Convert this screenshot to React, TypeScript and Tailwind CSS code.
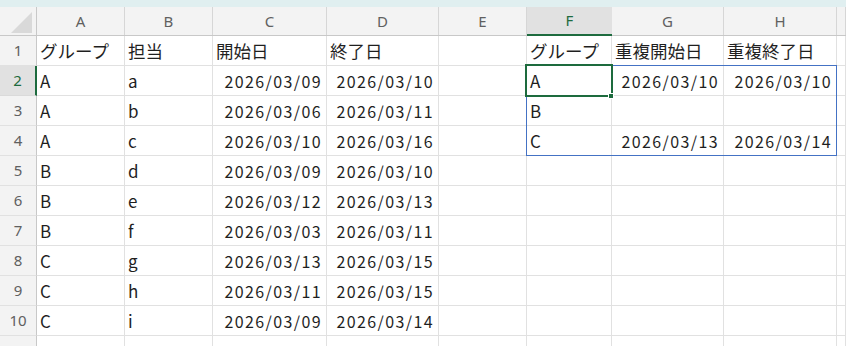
import React from "react";

const cols = ["A", "B", "C", "D", "E", "F", "G", "H", ""];
const colW = ["w-[37px]", "w-[88px]", "w-[88px]", "w-[114px]", "w-[112px]", "w-[88px]", "w-[85px]", "w-[112px]", "w-[113px]", "flex-1"];

type Cell = { t: string; kind?: "jp" | "l" | "r" };

const rows: Cell[][] = [
  [{ t: "グループ", kind: "jp" }, { t: "担当", kind: "jp" }, { t: "開始日", kind: "jp" }, { t: "終了日", kind: "jp" }, { t: "" }, { t: "グループ", kind: "jp" }, { t: "重複開始日", kind: "jp" }, { t: "重複終了日", kind: "jp" }, { t: "" }],
  [{ t: "A" }, { t: "a" }, { t: "2026/03/09", kind: "r" }, { t: "2026/03/10", kind: "r" }, { t: "" }, { t: "A" }, { t: "2026/03/10", kind: "r" }, { t: "2026/03/10", kind: "r" }, { t: "" }],
  [{ t: "A" }, { t: "b" }, { t: "2026/03/06", kind: "r" }, { t: "2026/03/11", kind: "r" }, { t: "" }, { t: "B" }, { t: "" }, { t: "" }, { t: "" }],
  [{ t: "A" }, { t: "c" }, { t: "2026/03/10", kind: "r" }, { t: "2026/03/16", kind: "r" }, { t: "" }, { t: "C" }, { t: "2026/03/13", kind: "r" }, { t: "2026/03/14", kind: "r" }, { t: "" }],
  [{ t: "B" }, { t: "d" }, { t: "2026/03/09", kind: "r" }, { t: "2026/03/10", kind: "r" }, { t: "" }, { t: "" }, { t: "" }, { t: "" }, { t: "" }],
  [{ t: "B" }, { t: "e" }, { t: "2026/03/12", kind: "r" }, { t: "2026/03/13", kind: "r" }, { t: "" }, { t: "" }, { t: "" }, { t: "" }, { t: "" }],
  [{ t: "B" }, { t: "f" }, { t: "2026/03/03", kind: "r" }, { t: "2026/03/11", kind: "r" }, { t: "" }, { t: "" }, { t: "" }, { t: "" }, { t: "" }],
  [{ t: "C" }, { t: "g" }, { t: "2026/03/13", kind: "r" }, { t: "2026/03/15", kind: "r" }, { t: "" }, { t: "" }, { t: "" }, { t: "" }, { t: "" }],
  [{ t: "C" }, { t: "h" }, { t: "2026/03/11", kind: "r" }, { t: "2026/03/15", kind: "r" }, { t: "" }, { t: "" }, { t: "" }, { t: "" }, { t: "" }],
  [{ t: "C" }, { t: "i" }, { t: "2026/03/09", kind: "r" }, { t: "2026/03/14", kind: "r" }, { t: "" }, { t: "" }, { t: "" }, { t: "" }, { t: "" }],
  [{ t: "" }, { t: "" }, { t: "" }, { t: "" }, { t: "" }, { t: "" }, { t: "" }, { t: "" }, { t: "" }],
];

const font = { fontFamily: '"Noto Sans CJK JP", "Noto Sans", sans-serif' };

function DataCell({ c, w }: { c: Cell; w: string }) {
  const base = `${w} shrink-0 h-full border-r border-b border-[#e1e1e1] flex items-center overflow-visible whitespace-nowrap text-[#1f1f1f]`;
  if (c.kind === "jp") {
    return <div className={`${base} pl-[3px] pt-[1px] text-[17.5px]`}>{c.t}</div>;
  }
  if (c.kind === "r") {
    return <div className={`${base} justify-end pr-[4px] pt-[1px] text-[16px] tracking-[1.4px]`}>{c.t}</div>;
  }
  return <div className={`${base} pl-[3px] pt-[1px] text-[17px]`}>{c.t}</div>;
}

export default function App() {
  return (
    <div className="w-[846px] h-[346px] overflow-hidden bg-white relative" style={font}>
      <div className="h-[7px] bg-[#e0eff0]" />
      {/* column headers */}
      <div className="flex h-[29px] bg-[#f3f3f3] border-b border-[#c8c8c8]" style={{ fontFamily: '"Noto Sans", sans-serif' }}>
        <div className="w-[37px] shrink-0 border-r border-[#c8c8c8] relative">
          <svg className="absolute left-[11px] top-[5px]" width="22" height="22" viewBox="0 0 22 22">
            <polygon points="21,0 21,21 0,21" fill="#d9d9d9" />
          </svg>
        </div>
        {cols.map((c, i) => (
          <div
            key={i}
            className={`${colW[i + 1]} shrink-0 flex items-center justify-center text-[15px] ${
              c === "F"
                ? "bg-[#e1e1e1] text-[#1d6b3e] border-b-2 border-[#1d6b3e] -mb-[1px]"
                : "text-[#606060] border-r border-[#d6d6d6]"
            }`}
          >
            {c}
          </div>
        ))}
      </div>
      {rows.map((r, ri) => (
        <div key={ri} className="flex h-[30px]">
          <div
            className={`w-[37px] shrink-0 h-full flex items-center justify-center text-[15px] ${
              ri === 1
                ? "bg-[#e1e1e1] text-[#1d6b3e] border-r-2 border-[#1d6b3e] border-b border-b-[#dadada]"
                : "bg-[#f3f3f3] text-[#606060] border-r border-[#c8c8c8] border-b border-b-[#e1e1e1]"
            }`}
            style={{ fontFamily: '"Noto Sans", sans-serif' }}
          >
            {ri < 10 ? ri + 1 : ""}
          </div>
          {r.map((c, ci) => (
            <DataCell key={ci} c={c} w={colW[ci + 1]} />
          ))}
        </div>
      ))}
      {/* spill range border */}
      <div className="absolute left-[526px] top-[65px] w-[311px] h-[91px] border border-[#4472c4] pointer-events-none" />
      {/* active cell */}
      <div className="absolute left-[525px] top-[64px] w-[88px] h-[33px] border-2 border-[#1d6b3e] pointer-events-none" />
      <div className="absolute left-[608px] top-[93px] w-[6px] h-[6px] bg-[#1d6b3e] border border-white" />
    </div>
  );
}
